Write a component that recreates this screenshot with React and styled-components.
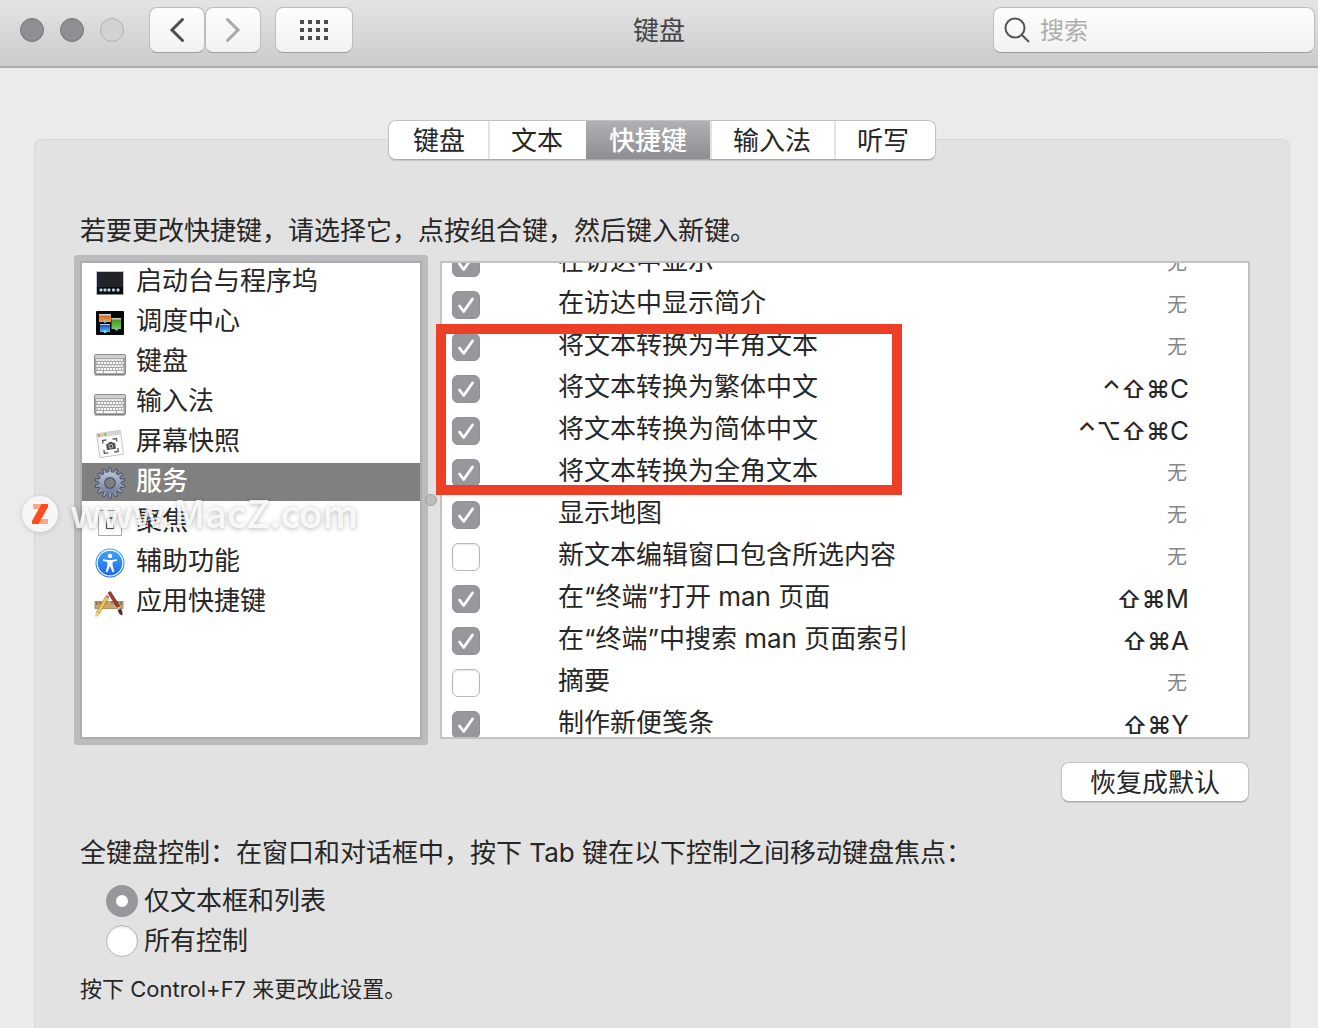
import styled, { createGlobalStyle, css } from "styled-components";

const GlobalStyle = createGlobalStyle`
  * {
    box-sizing: border-box;
  }
  body {
    margin: 0;
    background: #ebebeb;
    color: #262626;
    font-family: Inter, "Noto Sans CJK SC", sans-serif;
    font-size: 26px;
  }
  button, input {
    font: inherit;
    color: inherit;
  }
`;

const Window = styled.div`
  position: relative;
  display: flex;
  flex-direction: column;
  min-height: 100vh;
  overflow: hidden;
`;

const TitleBar = styled.header`
  display: grid;
  grid-template-columns: 1fr auto 1fr;
  align-items: start;
  height: 68px;
  padding: 7px 3px 0;
  background: linear-gradient(#e4e4e4, #cbcbcb);
  border-bottom: 2px solid #adadad;
`;

const TitleLeft = styled.div`
  display: flex;
  align-items: center;
`;

const Lights = styled.div`
  display: flex;
  gap: 16px;
  margin: 0 25px 0 17px;
`;

const Light = styled.button`
  width: 24px;
  height: 24px;
  padding: 0;
  border-radius: 50%;
  border: 1px solid ${(props) => (props.$off ? "#b0b0b0" : "#77767b")};
  background: ${(props) => (props.$off ? "#d2d2d2" : "#8f8e93")};
`;

const ToolButton = styled.button`
  display: flex;
  align-items: center;
  justify-content: center;
  width: ${(props) => (props.$wide ? "78px" : "56px")};
  height: 46px;
  margin-left: ${(props) => (props.$wide ? "14px" : "0")};
  padding: 0;
  border: 1px solid #bdbdbd;
  border-bottom-color: #a0a0a0;
  border-radius: 8px;
  background: linear-gradient(#fdfdfd, #f2f2f2);
`;

const Title = styled.h1`
  margin: 0;
  font-size: 26px;
  font-weight: 400;
  line-height: 48px;
  color: #454545;
`;

const SearchBox = styled.label`
  display: flex;
  align-items: center;
  justify-self: end;
  gap: 10px;
  width: 322px;
  height: 46px;
  padding: 0 10px;
  border: 1px solid #bdbdbd;
  border-bottom-color: #9c9c9c;
  border-radius: 8px;
  background: linear-gradient(#fdfdfd, #f2f2f2);

  svg {
    flex: none;
  }
`;

const SearchInput = styled.input`
  flex: 1;
  min-width: 0;
  padding: 0;
  border: none;
  outline: none;
  background: none;
  font-size: 24px;

  &::placeholder {
    color: #adadad;
    opacity: 1;
  }
`;

const Main = styled.main`
  flex: 1;
  display: flex;
  flex-direction: column;
  padding: 52px 28px 0 34px;
`;

const Tabs = styled.nav`
  z-index: 1;
  align-self: center;
  display: flex;
  height: 40px;
  border: 1px solid #c2c2c2;
  border-bottom-color: #a9a9a9;
  border-radius: 8px;
  overflow: hidden;
  background: #fff;
  box-shadow: 0 1px 1px rgba(0, 0, 0, 0.12);
`;

const Tab = styled.button`
  padding: 0 23px;
  border: none;
  background: #fff;
  line-height: 40px;
  box-shadow: inset 2px 0 #e2e2e2;

  &:first-child {
    padding-left: 24px;
    box-shadow: none;
  }
  &:last-child {
    padding-right: 26px;
  }
  ${(props) =>
    props.$active &&
    css`
      color: #fff;
      font-weight: 500;
      background: linear-gradient(#b1b0b5, #8e8d92);
      box-shadow: none;
    `}
`;

const Panel = styled.section`
  flex: 1;
  margin-top: -21px;
  padding: 71px 39px 20px 45px;
  border: 1px solid #d8d8d8;
  border-bottom: none;
  border-radius: 8px 8px 0 0;
  background: #e2e2e2;
`;

const Text = styled.p`
  margin: 0;
  line-height: 40px;
`;

const Lists = styled.div`
  position: relative;
  display: flex;
  gap: 18px;
  height: 478px;
  margin: 10px 0 23px;
`;

const Categories = styled.ul`
  flex: none;
  width: 342px;
  margin: 0;
  padding: 0;
  list-style: none;
  border: 2px solid #adadaf;
  background: #fff;
  box-shadow: 0 0 0 6px #bcbcbe;
  border-radius: 1px;
`;

const Category = styled.li`
  display: flex;
  align-items: center;
  gap: 10px;
  height: 38px;
  margin-bottom: 2px;
  padding-left: 12px;
  line-height: 36px;
  color: ${(props) => (props.$selected ? "#fff" : "inherit")};
  font-weight: ${(props) => (props.$selected ? 500 : 400)};
  background: ${(props) => (props.$selected ? "#808080" : "none")};

  svg {
    flex: none;
    margin-top: 2px;
  }
  span {
    height: 38px;
  }
`;

const Services = styled.ul`
  flex: 1;
  margin: 0;
  padding: 0;
  list-style: none;
  border: 2px solid #c2c2c2;
  background: #fff;
  overflow: hidden;

  /* the list is scrolled by half a row */
  li:first-child {
    margin-top: -21px;
  }
`;

const Service = styled.li`
  display: flex;
  align-items: center;
  justify-content: space-between;
  height: 42px;
  padding: 0 59px 0 10px;
`;

const ServiceLabel = styled.label`
  display: flex;
  align-items: center;
  gap: 78px;

  span {
    line-height: 36px;
    padding-bottom: 5px;
  }
`;

const Checkbox = styled.input`
  appearance: none;
  flex: none;
  width: 28px;
  height: 28px;
  margin: 0;
  border: 1px solid #b8b8b8;
  border-radius: 6px;
  background: #fff;
  box-shadow: inset 0 1px 2px rgba(0, 0, 0, 0.1);

  &:checked {
    border-color: #929196;
    box-shadow: none;
    background: #98979c
      url("data:image/svg+xml,%3Csvg xmlns='http://www.w3.org/2000/svg' viewBox='0 0 28 28'%3E%3Cpath d='M7.5 15l4.2 5.5L20.5 8' fill='none' stroke='white' stroke-width='2.8' stroke-linecap='round' stroke-linejoin='round'/%3E%3C/svg%3E")
      center / 28px 28px;
  }
`;

const Keys = styled.span`
  line-height: 42px;
`;

const Modifiers = styled.span`
  font-size: 24px;
  font-weight: 500;
`;

const NoKeys = styled.span`
  padding-right: 2px;
  font-size: 20px;
  line-height: 44px;
  color: #868686;
`;

const Highlight = styled.div`
  position: absolute;
  left: 356px;
  top: 63px;
  width: 466px;
  height: 171px;
  border: 10px solid #ec3f26;
  pointer-events: none;
`;

const SplitHandle = styled.div`
  position: absolute;
  left: 345px;
  top: 233px;
  width: 12px;
  height: 12px;
  border: 1px solid #a2a2a2;
  border-radius: 50%;
  background: #bdbdbd;
`;

const RestoreButton = styled.button`
  display: block;
  width: 188px;
  height: 40px;
  margin: 0 1px 31px auto;
  padding: 0;
  border: 1px solid #c2c2c2;
  border-bottom-color: #a9a9a9;
  border-radius: 8px;
  background: #fff;
  line-height: 40px;
  box-shadow: 0 1px 1px rgba(0, 0, 0, 0.12);
`;

const Options = styled.div`
  margin: 8px 0 12px 26px;
`;

const Option = styled.label`
  display: flex;
  align-items: center;
  gap: 6px;
  height: 40px;
  line-height: 42px;
`;

const Radio = styled.input`
  appearance: none;
  width: 32px;
  height: 32px;
  margin: 0;
  border: 1px solid #b4b4b4;
  border-radius: 50%;
  background: #fff;
  box-shadow: inset 0 2px 2px rgba(0, 0, 0, 0.08);

  &:checked {
    border: 10px solid #98979c;
    box-shadow: none;
  }
`;

const Note = styled.p`
  margin: 0;
  font-size: 22px;
  line-height: 32px;
`;

const Watermark = styled.div`
  position: absolute;
  left: 22px;
  top: 484px;
  display: flex;
  align-items: center;
  gap: 12px;
  font-family: "Noto Sans CJK SC", sans-serif;
  font-size: 38px;
  font-weight: 500;
  line-height: 56px;
  color: rgba(255, 255, 255, 0.85);
  text-shadow: 0 1px 5px rgba(0, 0, 0, 0.3);
  pointer-events: none;

  svg {
    margin-top: 4px;
    border-radius: 50%;
    box-shadow: 0 1px 5px rgba(0, 0, 0, 0.15);
  }
`;

function DockIcon() {
  return (
    <svg width="32" height="32" viewBox="0 0 32 32">
      <rect x="2.5" y="4.5" width="27" height="23" fill="#222326" stroke="#b9c6d6" />
      <rect x="3" y="20" width="26" height="7" fill="#0d0d0f" />
      {[5, 9, 13, 17.5, 22].map((x) => (
        <rect key={x} x={x + 0.5} y="21.5" width="3" height="3" rx="1" fill="#b9d3ee" />
      ))}
      <rect x="3" y="27" width="26" height="1" fill="#888" />
    </svg>
  );
}

function MissionIcon() {
  return (
    <svg width="32" height="32" viewBox="0 0 32 32">
      <defs>
        <linearGradient id="mOrange" x2="0" y2="1">
          <stop stopColor="#c9551c" />
          <stop offset="1" stopColor="#f3a24b" />
        </linearGradient>
        <linearGradient id="mBlue" x2="0" y2="1">
          <stop stopColor="#1745b8" />
          <stop offset="1" stopColor="#53b7f2" />
        </linearGradient>
        <linearGradient id="mGreen" x2="0" y2="1">
          <stop stopColor="#3b8d22" />
          <stop offset="1" stopColor="#7cc850" />
        </linearGradient>
      </defs>
      <rect x="2" y="4" width="28" height="24" rx="1" fill="#050607" />
      <rect x="5" y="7" width="12" height="8" fill="url(#mOrange)" />
      <rect x="5" y="7" width="12" height="1.5" fill="#d9d2cb" />
      <rect x="6" y="17" width="10" height="8" fill="url(#mBlue)" />
      <rect x="6" y="17" width="10" height="1" fill="#b9c9df" />
      <rect x="17.5" y="11" width="9.5" height="11" fill="url(#mGreen)" />
      <rect x="17.5" y="11" width="9.5" height="1.5" fill="#c6d4c0" />
      <circle cx="11" cy="14.5" r="1.6" fill="#5cc0f5" />
      <circle cx="11" cy="24.5" r="1.6" fill="#8ad4fa" />
      <circle cx="22.5" cy="22" r="1.6" fill="#5cc0f5" />
    </svg>
  );
}

function KeyboardIcon() {
  return (
    <svg width="32" height="32" viewBox="0 0 32 32">
      <rect x="0.5" y="7.5" width="31" height="20" rx="1" fill="#a6a6a6" stroke="#8b8b8b" />
      <rect x="1" y="8" width="30" height="3" fill="#cfcfcf" />
      <path d="M1 28h30" stroke="#777" />
      <path
        d="M2.500 13h27M2.500 19h27"
        stroke="#fafafa"
        strokeWidth="2"
        strokeDasharray="2.2 0.8"
      />
      <path
        d="M2.500 16h27M2.500 22h27"
        stroke="#fafafa"
        strokeWidth="2"
        strokeDasharray="2.2 0.8"
        strokeDashoffset="1.500"
      />
      <path d="M2.500 25h6.500M10 25h12M23 25h6.500" stroke="#fafafa" strokeWidth="2" />
    </svg>
  );
}

function ScreenshotIcon() {
  return (
    <svg width="32" height="32" viewBox="0 0 32 32">
      <g transform="rotate(-8 16 16)">
        <rect x="4" y="5" width="24" height="24" rx="1" fill="#fbfbfb" stroke="#c4c4c4" />
        <rect x="4" y="5" width="24" height="4" fill="#d5d5d5" />
        <circle cx="6" cy="7" r="1.2" fill="#ee6a5f" />
        <circle cx="9.3" cy="7" r="1.2" fill="#f0bd4f" />
        <circle cx="12.6" cy="7" r="1.2" fill="#62c655" />
        <path
          d="M9 15.500v-3h4M19 12.500h4v3M23 22v3.500h-4M13 25.500H9V22"
          fill="none"
          stroke="#555"
          strokeWidth="1.3"
        />
        <path d="M12 16.500h2l1-1.500h3l1 1.500h2v6h-9z" fill="#4c4c4c" />
        <circle cx="16.400" cy="19.300" r="1.900" fill="#4c4c4c" stroke="#ddd" strokeWidth="0.800" />
      </g>
    </svg>
  );
}

function GearIcon() {
  const teeth = Array.from({ length: 14 }, (_, i) => (i * 360) / 14);
  return (
    <svg width="32" height="32" viewBox="0 0 32 32">
      <defs>
        <linearGradient id="gear" gradientUnits="userSpaceOnUse" x1="0" y1="4" x2="0" y2="28">
          <stop stopColor="#bcc8dc" />
          <stop offset="1" stopColor="#6c7794" />
        </linearGradient>
      </defs>
      {teeth.map((a) => (
        <path
          key={a}
          d="M14 6.500L15 .8h2l1 5.700z"
          fill="#97a4c0"
          stroke="#3a4358"
          strokeWidth="0.800"
          transform={`rotate(${a} 16 16)`}
        />
      ))}
      <circle cx="16" cy="16" r="8" fill="none" stroke="url(#gear)" strokeWidth="5.600" />
      <circle cx="16" cy="16" r="5.300" fill="#808080" stroke="#4a546c" strokeWidth="1.200" />
    </svg>
  );
}

function SpotlightIcon() {
  return (
    <svg width="32" height="32" viewBox="0 0 32 32">
      <path d="M4.500 3.500h18l5 5v20h-23z" fill="#fff" stroke="#aaa" />
      <rect x="12.500" y="11.500" width="7" height="10" fill="#f4f4f4" stroke="#555" />
      <path d="M12 10.500h8" stroke="#888" />
    </svg>
  );
}

function AccessibilityIcon() {
  return (
    <svg width="32" height="32" viewBox="0 0 32 32">
      <defs>
        <linearGradient id="acc" x2="0" y2="1">
          <stop stopColor="#41aaf5" />
          <stop offset="1" stopColor="#1c62ee" />
        </linearGradient>
      </defs>
      <circle cx="16" cy="16" r="14.500" fill="url(#acc)" />
      <circle cx="16" cy="16" r="12.900" fill="none" stroke="#fff" strokeWidth="1.200" />
      <circle cx="16" cy="9" r="2.200" fill="#fff" />
      <path
        d="M9 12.200l5 .9h4l5-.9.200 1.500-4.600 1.400v3.400l1.700 6.200-1.700.5-2.400-6h-.4l-2.400 6-1.700-.5 1.700-6.200v-3.400L8.800 13.700z"
        fill="#fff"
      />
    </svg>
  );
}

function AppsIcon() {
  return (
    <svg width="32" height="32" viewBox="0 0 32 32">
      <rect x="1" y="14.500" width="28" height="7" fill="#c8a774" stroke="#95713a" strokeWidth="0.700" />
      <path d="M3 15v3M6 15v2M9 15v3M12 15v2M18 15v2M21 15v3M24 15v2M27 15v3" stroke="#69502a" />
      <path d="M14 6l2.500-1.500 9.500 15-2.500 1.500z" fill="#a5392a" stroke="#571b14" strokeWidth="0.600" />
      <path d="M22.500 21l3-1.800 1.300 2.200-3 1.800z" fill="#b5bcc4" />
      <path d="M23.800 23.200l3-1.800c1.600 2 2 4.300 1.500 7.100-2.600-.7-4.100-2.600-4.500-5.300z" fill="#4a3528" />
      <path d="M11.500 9.500l3 1.700L5 27.300l-3.200 2 .5-3.700z" fill="#f0c65c" stroke="#a5762a" strokeWidth="0.600" />
      <path d="M11.500 9.500l1-1.700 3 1.700-1 1.700z" fill="#d86f83" />
      <path d="M2.300 25.600L5 27.300l-3.200 2z" fill="#efd6aa" />
    </svg>
  );
}

const categories = [
  { name: "启动台与程序坞", Icon: DockIcon },
  { name: "调度中心", Icon: MissionIcon },
  { name: "键盘", Icon: KeyboardIcon },
  { name: "输入法", Icon: KeyboardIcon },
  { name: "屏幕快照", Icon: ScreenshotIcon },
  { name: "服务", Icon: GearIcon, selected: true },
  { name: "聚焦", Icon: SpotlightIcon },
  { name: "辅助功能", Icon: AccessibilityIcon },
  { name: "应用快捷键", Icon: AppsIcon },
];

const services = [
  { name: "在访达中显示", checked: true },
  { name: "在访达中显示简介", checked: true },
  { name: "将文本转换为半角文本", checked: true },
  { name: "将文本转换为繁体中文", checked: true, mods: "⌃⇧⌘", letter: "C" },
  { name: "将文本转换为简体中文", checked: true, mods: "⌃⌥⇧⌘", letter: "C" },
  { name: "将文本转换为全角文本", checked: true },
  { name: "显示地图", checked: true },
  { name: "新文本编辑窗口包含所选内容", checked: false },
  { name: "在“终端”打开 man 页面", checked: true, mods: "⇧⌘", letter: "M" },
  { name: "在“终端”中搜索 man 页面索引", checked: true, mods: "⇧⌘", letter: "A" },
  { name: "摘要", checked: false },
  { name: "制作新便笺条", checked: true, mods: "⇧⌘", letter: "Y" },
];

const tabs = ["键盘", "文本", "快捷键", "输入法", "听写"];

function App() {
  return (
    <>
      <GlobalStyle />
      <Window lang="zh-CN">
        <TitleBar>
          <TitleLeft>
            <Lights>
              <Light aria-label="关闭" />
              <Light aria-label="最小化" />
              <Light $off aria-label="缩放" />
            </Lights>
            <ToolButton aria-label="后退">
              <svg width="16" height="26" viewBox="0 0 16 26" fill="none" stroke="#4d4d4d" strokeWidth="3" strokeLinecap="round">
                <path d="M13.500 2.500L3 13l10.500 10.500" />
              </svg>
            </ToolButton>
            <ToolButton aria-label="前进">
              <svg width="16" height="26" viewBox="0 0 16 26" fill="none" stroke="#a9a9a9" strokeWidth="3" strokeLinecap="round">
                <path d="M2.500 2.500L13 13 2.500 23.500" />
              </svg>
            </ToolButton>
            <ToolButton $wide aria-label="显示全部">
              <svg width="28" height="20" viewBox="0 0 28 20" fill="#4d4d4d">
                {[0, 8, 16].map((y) =>
                  [0, 8, 16, 24].map((x) => (
                    <rect key={`${x}-${y}`} x={x} y={y} width="4" height="4" />
                  ))
                )}
              </svg>
            </ToolButton>
          </TitleLeft>
          <Title>键盘</Title>
          <SearchBox>
            <svg width="26" height="26" viewBox="0 0 26 26" fill="none" stroke="#555" strokeWidth="2">
              <circle cx="11" cy="11" r="9.500" />
              <path d="M17.700 17.700L25 25" />
            </svg>
            <SearchInput type="text" placeholder="搜索" aria-label="搜索" />
          </SearchBox>
        </TitleBar>
        <Main>
          <Tabs>
            {tabs.map((tab) => (
              <Tab key={tab} $active={tab === "快捷键"}>
                {tab}
              </Tab>
            ))}
          </Tabs>
          <Panel>
            <Text>若要更改快捷键，请选择它，点按组合键，然后键入新键。</Text>
            <Lists>
              <Categories>
                {categories.map(({ name, Icon, selected }) => (
                  <Category key={name} $selected={selected}>
                    <Icon />
                    <span>{name}</span>
                  </Category>
                ))}
              </Categories>
              <Services>
                {services.map(({ name, checked, mods, letter }) => (
                  <Service key={name}>
                    <ServiceLabel>
                      <Checkbox type="checkbox" defaultChecked={checked} />
                      <span>{name}</span>
                    </ServiceLabel>
                    {letter ? (
                      <Keys>
                        <Modifiers>{mods}</Modifiers>
                        {letter}
                      </Keys>
                    ) : (
                      <NoKeys>无</NoKeys>
                    )}
                  </Service>
                ))}
              </Services>
              <SplitHandle />
              <Highlight />
            </Lists>
            <RestoreButton>恢复成默认</RestoreButton>
            <Text>全键盘控制：在窗口和对话框中，按下 Tab 键在以下控制之间移动键盘焦点：</Text>
            <Options>
              <Option>
                <Radio type="radio" name="access" defaultChecked />
                仅文本框和列表
              </Option>
              <Option>
                <Radio type="radio" name="access" />
                所有控制
              </Option>
            </Options>
            <Note>按下 Control+F7 来更改此设置。</Note>
          </Panel>
        </Main>
        <Watermark>
          <svg width="36" height="36" viewBox="0 0 36 36">
            <circle cx="18" cy="18" r="18" fill="#f6f6f6" />
            <path d="M11 8h15v3l-2 2H11z" fill="#ffa48a" />
            <path d="M12 23h14v5H10v-3z" fill="#ffa48a" />
            <path d="M19.500 8H26v3L16.500 28H10v-3z" fill="#fb4f1b" />
          </svg>
          www.MacZ.com
        </Watermark>
      </Window>
    </>
  );
}

export default App;
